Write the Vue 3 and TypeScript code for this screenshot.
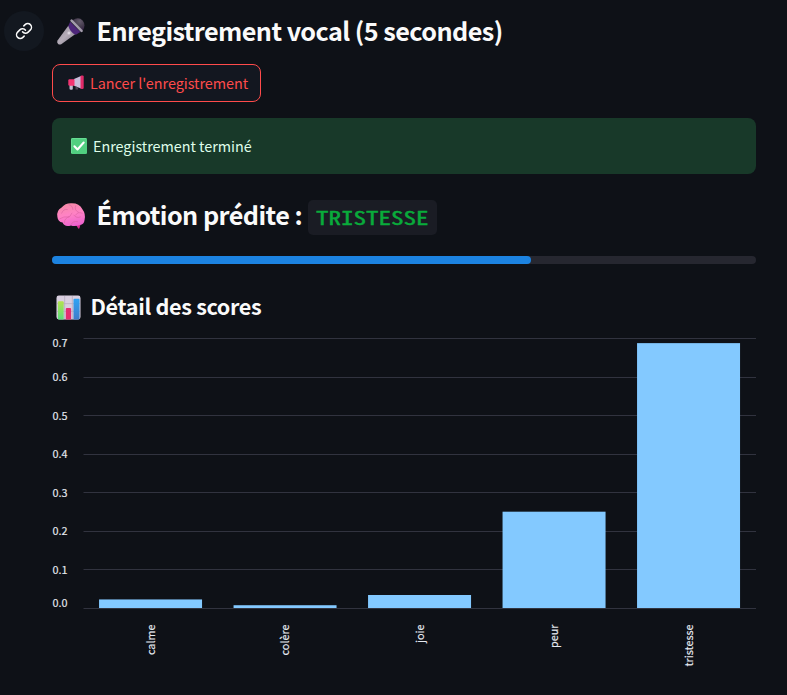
<script setup lang="ts">
interface Score {
  label: string
  value: number
}

const scores: Score[] = [
  { label: 'calme', value: 0.0235 },
  { label: 'colère', value: 0.0085 },
  { label: 'joie', value: 0.035 },
  { label: 'peur', value: 0.251 },
  { label: 'tristesse', value: 0.688 },
]

const plot = { left: 31.5, right: 704, top: 8.5, bottom: 278.5, max: 0.7 }
const step = (plot.right - plot.left) / scores.length
const barWidth = 103

const yOf = (v: number): number => plot.bottom - (v / plot.max) * (plot.bottom - plot.top)

const ticks = Array.from({ length: 8 }, (_, i) => {
  const raw = yOf(i / 10)
  const shift = i === 0 ? -1.5 : i === 7 ? 8.5 : 4
  return { text: (i / 10).toFixed(1), y: Math.floor(raw + 0.01) + 0.5, textY: Math.round(raw + shift) }
})

const bars = scores.map((s, i) => {
  const center = plot.left + step * (i + 0.5) - 0.2
  return { label: s.label, center, x: center - barWidth / 2, y: yOf(s.value), height: plot.bottom - 0.5 - yOf(s.value) }
})

const progress = 68
</script>

<template>
  <main class="page">
    <h2 class="heading heading-first">
      <a class="anchor" aria-label="Lien">
        <svg width="18" height="18" viewBox="0 0 24 24" fill="none" stroke="#fafafa" stroke-width="2" stroke-linecap="round" stroke-linejoin="round">
          <path d="M10 13a5 5 0 0 0 7.54.54l3-3a5 5 0 0 0-7.07-7.07l-1.72 1.71" />
          <path d="M14 11a5 5 0 0 0-7.54-.54l-3 3a5 5 0 0 0 7.07 7.07l1.71-1.71" />
        </svg>
      </a>
      <svg class="emoji-lg" viewBox="0 0 32 32">
        <defs>
          <linearGradient id="handle" x1="0" y1="0" x2="1" y2="1">
            <stop offset="0" stop-color="#8f8994" /><stop offset=".5" stop-color="#b5adb9" /><stop offset="1" stop-color="#77707e" />
          </linearGradient>
          <radialGradient id="head" cx=".6" cy=".25" r=".8">
            <stop offset="0" stop-color="#645b6c" /><stop offset=".55" stop-color="#453b4e" /><stop offset="1" stop-color="#332046" />
          </radialGradient>
        </defs>
        <g transform="translate(-.9 0)">
          <path d="M14 10.500 22 19 6.500 30Q4.500 31 3 29.500Q1.500 28 2.500 26Z" fill="url(#handle)" />
          <path d="M14 10.500 16 6 27 17 22 20Q16 18 14 10.500Z" fill="#4d2679" />
          <path d="M18.500 4.500Q25 0 29.500 5Q33 9.500 29.500 15.500Z" fill="url(#head)" />
          <path d="m17.500 5 10.700 10.800" stroke="#a49cac" stroke-width="2.700" stroke-linecap="round" />
          <circle cx="14.700" cy="18" r="1.600" fill="#dbd6df" />
        </g>
      </svg>
      <span class="t-first">Enregistrement vocal (5 secondes)</span>
    </h2>

    <button class="record" type="button">
      <svg class="emoji-sm" viewBox="0 0 16 16">
        <path d="M1.500 9.500h3.300v4.200q0 1-.9 1h-1q-1.400 0-1.400-1.200z" fill="#c2bad0" />
        <path d="M6 4 13 1v12.500L6 10.800Z" fill="#c9bddb" />
        <path d="M1.500 4.300H6.500V10.800H1.500Q.3 10.800.3 9.600V5.500Q.3 4.300 1.500 4.300Z" fill="#f43472" />
        <rect x="12.500" y=".4" width="3.200" height="13.600" rx="1.200" fill="#e12b69" />
        <path d="M7.500 11.400 10 12.300V14.500H7.500Z" fill="#4a4352" />
      </svg>
      <span class="t-button">Lancer l'enregistrement</span>
    </button>

    <div class="alert">
      <svg class="emoji-sm" viewBox="0 0 16 16">
        <rect width="16" height="16" rx="1.300" fill="#51cf80" />
        <path d="M.6 15V1.600Q.6.6 1.600.6H15" fill="none" stroke="#70e09b" stroke-width=".8" />
        <path d="m3.400 8.300 3.100 3.200 6.200-7" fill="none" stroke="#fff" stroke-width="2" stroke-linecap="round" stroke-linejoin="round" />
      </svg>
      <span class="t-alert">Enregistrement terminé</span>
    </div>

    <h2 class="heading heading-result">
      <svg class="emoji-lg" viewBox="0 0 32 32">
        <defs>
          <linearGradient id="brain" x1=".3" y1="0" x2=".6" y2="1">
            <stop offset="0" stop-color="#f58aa5" /><stop offset=".5" stop-color="#ff82c5" /><stop offset="1" stop-color="#ee62cf" />
          </linearGradient>
        </defs>
        <path d="m20.500 24 3 5Q24 30 25 29L26.500 24Z" fill="#d82b91" />
        <path d="M1.500 17Q0 10.500 6 7Q10 2 17 2.500Q25 2.500 28 8.500Q32 14 30.500 20Q30 25 25.500 25.500Q20 27.500 16 26Q9 28 7 23Q2 22 1.500 17Z" fill="url(#brain)" />
        <path d="M6 13q2-5 6-4m2-5q4 1 4 5m3-4q-2 5 3 7m4 1q-5-2-7 2m-17 4q5-3 8-2t5-4m-8 10q0-5 5-6m5-2q3 4 7 2m-10 8q2-4 7-3" fill="none" stroke="#d8609f" stroke-opacity=".75" stroke-width=".8" stroke-linecap="round" />
      </svg>
      <span class="t-result">Émotion prédite :</span>
      <code class="chip"><span>TRISTESSE</span></code>
    </h2>

    <div class="progress"><div class="progress-fill" :style="{ width: progress + '%' }"></div></div>

    <h3 class="heading heading-scores">
      <svg class="emoji-md" viewBox="0 0 26 26">
        <defs>
          <linearGradient id="green" x1="0" y1="0" x2="0" y2="1"><stop offset="0" stop-color="#b4e34e" /><stop offset="1" stop-color="#59dc7d" /></linearGradient>
          <linearGradient id="blue" x1="0" y1="0" x2="0" y2="1"><stop offset="0" stop-color="#2fa4f5" /><stop offset="1" stop-color="#3f7cc9" /></linearGradient>
        </defs>
        <rect x=".5" y=".5" width="25" height="25" rx="2.500" fill="#d9cfe0" />
        <path d="M9 1v24M17 1v24M1 9h24M1 17h24" stroke="#b6acbf" stroke-width=".8" />
        <path d="M2 7.500q0-1 1-1h4q1 0 1 1v18H3q-1 0-1-1z" fill="url(#green)" />
        <path d="M10.200 14.500q0-1 1-1h3.500q1 0 1 1v11h-5.500z" fill="#e52c70" />
        <path d="M18.200 5q0-1 1-1h4.300q1 0 1 1v19.500q0 1-1 1h-5.300z" fill="url(#blue)" />
      </svg>
      <span class="t-scores">Détail des scores</span>
    </h3>

    <svg class="chart" width="704" height="345" viewBox="0 0 704 345">
      <g v-for="t in ticks" :key="t.text">
        <line :x1="plot.left" :x2="plot.right" :y1="t.y" :y2="t.y" stroke="#31333f" />
        <text class="tick" x="0.5" :y="t.textY">{{ t.text }}</text>
      </g>
      <g v-for="b in bars" :key="b.label">
        <rect :x="b.x" :y="b.y" :width="barWidth" :height="b.height" fill="#83c9ff" />
        <text class="tick" text-anchor="end" :transform="`translate(${b.center + 4} 294.500) rotate(-90)`">{{ b.label }}</text>
      </g>
    </svg>
  </main>
</template>

<style>
body {
  margin: 0;
  background: #0e1117;
}
</style>

<style scoped>
.page {
  box-sizing: border-box;
  width: 787px;
  height: 695px;
  padding: 10px 31px 0 52px;
  overflow: hidden;
  display: flex;
  flex-direction: column;
  align-items: flex-start;
  background: #0e1117;
  color: #fafafa;
  font-family: "Noto Sans CJK SC", "Noto Sans", sans-serif;
}
.heading {
  position: relative;
  display: flex;
  align-items: center;
  margin: 0;
  font-weight: 600;
  white-space: nowrap;
}
.heading-first,
.heading-result {
  height: 42px;
  padding-left: 4px;
  gap: 10.5px;
  font-size: 25.2px;
  line-height: 42px;
}
.heading-first {
  margin-bottom: 12px;
}
.t-first,
.t-scores,
.t-alert {
  padding-bottom: 2px;
}
.t-first {
  letter-spacing: -0.56px;
}
.t-result {
  padding-bottom: 4px;
  letter-spacing: -0.54px;
}
.t-scores {
  letter-spacing: -0.34px;
}
.anchor {
  position: absolute;
  left: -48px;
  top: 1px;
  width: 40px;
  height: 40px;
  border-radius: 50%;
  background: #131820;
  display: flex;
  align-items: center;
  justify-content: center;
}
.emoji-lg {
  width: 30px;
  height: 30px;
}
.emoji-md {
  width: 25px;
  height: 25px;
}
.emoji-sm {
  width: 16px;
  height: 16px;
}
.record {
  box-sizing: border-box;
  width: 209px;
  height: 38px;
  padding: 0 0 0 15px;
  display: flex;
  align-items: center;
  gap: 6px;
  border: 1px solid #ff4b4b;
  border-radius: 8px;
  background: #131720;
  color: #ff4b4b;
  font: 14.4px/22px "Noto Sans CJK SC", "Noto Sans", sans-serif;
  letter-spacing: -0.03px;
  white-space: nowrap;
}
.alert {
  box-sizing: border-box;
  width: 704px;
  height: 56px;
  margin-top: 16px;
  padding-left: 19px;
  display: flex;
  align-items: center;
  gap: 6px;
  border-radius: 8px;
  background: #183929;
  color: #dffde9;
  font-size: 14.4px;
  letter-spacing: -0.03px;
}
.heading-result {
  margin-top: 21px;
}
.chip {
  box-sizing: border-box;
  width: 129px;
  height: 35px;
  margin: 3px 0 0 -4.6px;
  padding-left: 8px;
  border-radius: 5px;
  background: #1a1c24;
  color: #09ab3b;
  font: 400 18.9px/33px "Noto Sans Mono CJK SC", "DejaVu Sans Mono", monospace;
  -webkit-text-stroke: 0.4px #09ab3b;
}
.chip span {
  display: inline-block;
  transform: scaleX(1.325);
  transform-origin: 0 50%;
}
.progress {
  width: 704px;
  height: 8px;
  margin-top: 19px;
  border-radius: 4px;
  background: #262730;
}
.progress-fill {
  height: 8px;
  border-radius: 4px;
  background: #1c83e1;
}
.heading-scores {
  height: 34px;
  margin-top: 26px;
  padding-left: 4px;
  gap: 9.5px;
  font-size: 21.6px;
  line-height: 34px;
}
.chart {
  display: block;
  margin-top: 6px;
}
.tick {
  fill: #e6eaf1;
  stroke: #e6eaf1;
  stroke-width: 0.15px;
  font-size: 10.8px;
}
</style>
